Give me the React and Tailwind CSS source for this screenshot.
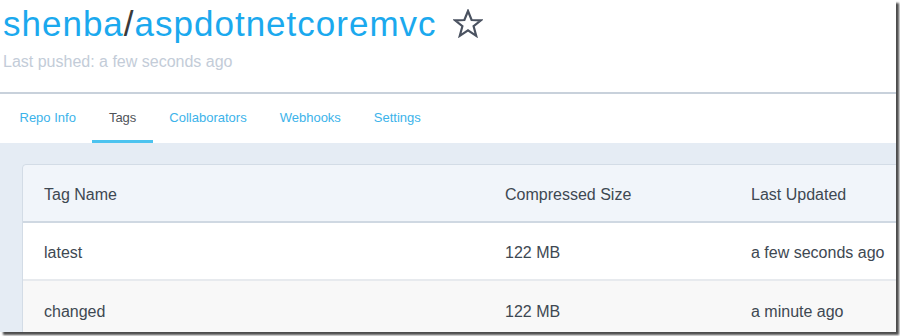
import React from 'react';

const tabs = ['Repo Info', 'Tags', 'Collaborators', 'Webhooks', 'Settings'];

const tags = [
  { name: 'latest', size: '122 MB', updated: 'a few seconds ago' },
  { name: 'changed', size: '122 MB', updated: 'a minute ago' },
];

const StarIcon = () => (
  <svg width="30" height="29" viewBox="0 0 30 29" fill="none">
    <polygon
      points="15,2 18.6,11 28,11.3 20.6,17.2 23.2,26.8 15,21.3 6.8,26.8 9.4,17.2 2,11.3 11.4,11"
      stroke="#4a5260"
      strokeWidth="2.2"
      strokeLinejoin="miter"
    />
  </svg>
);

const App = () => {
  return (
    <div
      className="w-[900px] h-[336px] bg-white"
      style={{ fontFamily: '"Liberation Sans", Arial, sans-serif' }}
    >
      <div className="w-[896px] h-[332px] overflow-hidden bg-white flex flex-col shadow-[3px_3px_2px_rgba(0,0,0,0.7)]">
        <div className="pl-[3px] pt-[4px]">
          <div className="flex items-center">
            <h1 className="text-[35px] leading-[40px] tracking-[1px] text-[#1ba9ee] font-normal">
              shenba<span className="text-[#3a3a3a]">/</span>aspdotnetcoremvc
            </h1>
            <span className="ml-[16px] -mt-[2px]">
              <StarIcon />
            </span>
          </div>
          <p className="mt-[8px] mb-[20px] text-[16px] leading-[20px] text-[#c3ccd8]">
            Last pushed: a few seconds ago
          </p>
        </div>

        <div className="h-[2px] bg-[#c8d1db]" />

        <nav className="flex pl-[3px] h-[49px]">
          {tabs.map((tab) => {
            const active = tab === 'Tags';
            return (
              <div
                key={tab}
                className={`flex items-center px-[16.5px] pt-[2px] text-[13px] border-b-[3px] ${
                  active
                    ? 'text-[#505459] border-[#4cc3ef]'
                    : 'text-[#3cb3ea] border-transparent'
                }`}
              >
                {tab}
              </div>
            );
          })}
        </nav>

        <div className="flex-1 bg-[#e5ecf4] pt-[21px] pl-[22px] overflow-hidden">
          <div className="w-[1000px] border border-[#d3dce6] rounded-tl-[4px] text-[16px] text-[#3e4852]">
            <div className="grid grid-cols-[482px_246px_1fr] h-[58px] pt-[3px] items-center bg-[#f1f5fa] border-b-2 border-[#cfd8e2] rounded-tl-[4px]">
              <div className="pl-[21px]">Tag Name</div>
              <div>Compressed Size</div>
              <div>Last Updated</div>
            </div>
            {tags.map((tag, i) => (
              <div
                key={tag.name}
                className={`grid grid-cols-[482px_246px_1fr] h-[58px] pt-[3px] items-center ${
                  i === 0 ? 'bg-white border-b-2 border-[#e7eaee]' : 'bg-[#f8f8f8]'
                }`}
              >
                <div className="pl-[21px]">{tag.name}</div>
                <div>{tag.size}</div>
                <div>{tag.updated}</div>
              </div>
            ))}
          </div>
        </div>
      </div>
    </div>
  );
};

export default App;
